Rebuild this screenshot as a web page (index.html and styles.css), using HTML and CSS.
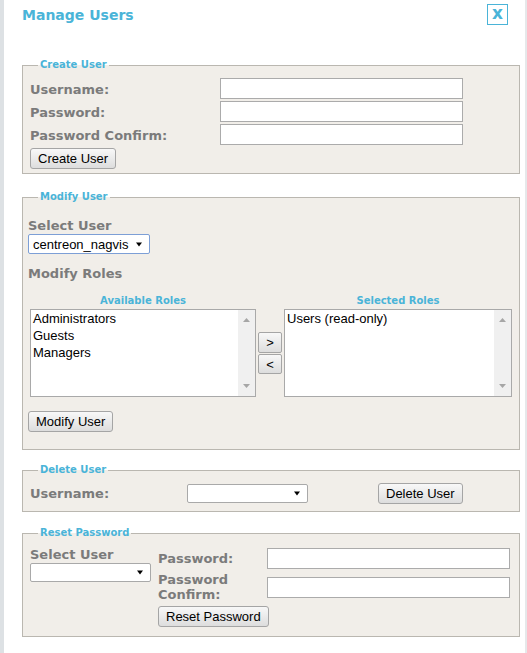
FILE: index.html
```html
<!DOCTYPE html>
<html>
<head>
<meta charset="utf-8">
<title>Manage Users</title>
<link rel="stylesheet" href="styles.css">
</head>
<body>
<div class="page">
  <div class="dialog">
    <header class="dlg-head">
      <h1 class="dlg-title">Manage Users</h1>
      <button class="close" type="button">x</button>
    </header>

    <fieldset class="box box-create">
      <legend>Create User</legend>
      <div class="box-body body-create">
        <div class="form-grid">
          <label class="lbl lbl-row">Username:</label><input class="txt" type="text">
          <label class="lbl lbl-row">Password:</label><input class="txt" type="password">
          <label class="lbl lbl-row">Password Confirm:</label><input class="txt" type="password">
        </div>
        <button class="btn btn-create" type="button">Create User</button>
      </div>
    </fieldset>

    <fieldset class="box box-modify">
      <legend>Modify User</legend>
      <div class="box-body body-modify">
        <div class="lbl lbl-block">Select User</div>
        <div class="combo combo-focus combo-modify">
          <span class="combo-val">centreon_nagvis</span>
          <svg class="combo-arrow" width="6" height="5" viewBox="0 0 6 5"><polygon points="0,0.5 6,0.5 3,4.5" fill="#000"/></svg>
        </div>
        <div class="lbl lbl-block roles-title">Modify Roles</div>
        <div class="roles">
          <div class="roles-head">Available Roles</div>
          <div></div>
          <div class="roles-head">Selected Roles</div>
          <div class="list">
            <div class="list-items">
              <div>Administrators</div>
              <div>Guests</div>
              <div>Managers</div>
            </div>
            <div class="scroll">
              <svg width="7" height="4" viewBox="0 0 7 4"><polygon points="0,4 7,4 3.5,0" fill="#a6a6a6"/></svg>
              <svg width="7" height="4" viewBox="0 0 7 4"><polygon points="0,0 7,0 3.5,4" fill="#a6a6a6"/></svg>
            </div>
          </div>
          <div class="movers">
            <button class="btn btn-move btn-move-r" type="button">&gt;</button>
            <button class="btn btn-move" type="button">&lt;</button>
          </div>
          <div class="list">
            <div class="list-items">
              <div>Users (read-only)</div>
            </div>
            <div class="scroll">
              <svg width="7" height="4" viewBox="0 0 7 4"><polygon points="0,4 7,4 3.5,0" fill="#a6a6a6"/></svg>
              <svg width="7" height="4" viewBox="0 0 7 4"><polygon points="0,0 7,0 3.5,4" fill="#a6a6a6"/></svg>
            </div>
          </div>
        </div>
        <button class="btn btn-modify" type="button">Modify User</button>
      </div>
    </fieldset>

    <fieldset class="box box-delete">
      <legend>Delete User</legend>
      <div class="box-body body-delete">
        <label class="lbl lbl-del">Username:</label>
        <div class="combo combo-sm">
          <span class="combo-val"></span>
          <svg class="combo-arrow" width="6" height="5" viewBox="0 0 6 5"><polygon points="0,0.5 6,0.5 3,4.5" fill="#000"/></svg>
        </div>
        <button class="btn btn-delete" type="button">Delete User</button>
      </div>
    </fieldset>

    <fieldset class="box box-reset">
      <legend>Reset Password</legend>
      <div class="box-body body-reset">
        <div class="reset-user">
          <div class="lbl lbl-block">Select User</div>
          <div class="combo combo-sm">
            <span class="combo-val"></span>
            <svg class="combo-arrow" width="6" height="5" viewBox="0 0 6 5"><polygon points="0,0.5 6,0.5 3,4.5" fill="#000"/></svg>
          </div>
        </div>
        <label class="lbl lbl-reset">Password:</label>
        <input class="txt txt-r1" type="password">
        <label class="lbl lbl-reset">Password Confirm:</label>
        <input class="txt" type="password">
        <button class="btn btn-reset" type="button">Reset Password</button>
      </div>
    </fieldset>
  </div>
</div>
</body>
</html>
```

FILE: styles.css
```css
html, body {
  margin: 0;
  padding: 0;
  background: #ffffff;
}

body {
  font-family: "DejaVu Sans", Verdana, sans-serif;
}

.page {
  box-sizing: border-box;
  width: 527px;
  min-height: 653px;
  border-left: 4px solid #dde1e4;
  border-right: 2px solid #e6e8ea;
}

.dialog {
  padding-left: 18px;
}

.dlg-head {
  box-sizing: border-box;
  height: 59px;
  display: flex;
  justify-content: space-between;
  align-items: flex-start;
  padding-right: 17px;
}

.dlg-title {
  margin: 6px 0 0 0;
  font-size: 14px;
  line-height: 18px;
  font-weight: bold;
  color: #4ab4d8;
}

.close {
  margin-top: 4px;
  width: 21px;
  height: 21px;
  box-sizing: border-box;
  padding: 0 0 3px 0;
  border: 1px solid #4ab4d8;
  background: #ffffff;
  color: #4ab4d8;
  font: bold 17px/16px "DejaVu Sans", sans-serif;
}

/* fieldsets */
.box {
  box-sizing: border-box;
  width: 498px;
  min-width: 0;
  margin: 0;
  padding: 0;
  border: 1px solid #bab7b0;
  background: #f1eee9;
}

.box legend {
  margin-left: 15px;
  padding: 0 2px;
  font-size: 10px;
  line-height: 12px;
  font-weight: bold;
  color: #4ab4d8;
}

.box-modify { margin-top: 17px; }
.box-delete { margin-top: 14px; }
.box-reset { margin-top: 15px; }

.lbl {
  font-size: 13px;
  font-weight: bold;
  color: #7b7b7b;
}

.lbl-block {
  line-height: 16px;
}

.txt {
  box-sizing: border-box;
  width: 243px;
  height: 21px;
  margin: 0;
  padding: 0 3px;
  border: 1px solid #ababab;
  background: #ffffff;
  font: 13px "Liberation Sans", Arial, sans-serif;
}

.btn {
  box-sizing: border-box;
  display: block;
  height: 21px;
  margin: 0;
  padding: 0 7px;
  border: 1px solid #a5a5a5;
  border-radius: 3px;
  background: linear-gradient(#f8f8f8, #dddddd);
  color: #000000;
  font: 13px/17px "Liberation Sans", Arial, sans-serif;
}

/* create */
.body-create {
  padding: 7px 0 4px 7px;
}

.form-grid {
  display: grid;
  grid-template-columns: 190px 243px;
  grid-auto-rows: 21px;
  row-gap: 2px;
}

.lbl-row {
  padding-top: 2px;
  line-height: 19px;
}

.btn-create {
  margin-top: 3px;
}

/* combos */
.combo {
  box-sizing: border-box;
  display: flex;
  align-items: center;
  justify-content: space-between;
  background: #ffffff;
  border: 1px solid #a9a9a9;
  border-radius: 2px;
  padding: 0 7px 0 4px;
  font: 13px "Liberation Sans", Arial, sans-serif;
  color: #000000;
}

.combo-focus {
  border-color: #7d9fd6;
}

.combo-modify {
  width: 122px;
  height: 20px;
}

.combo-sm {
  width: 121px;
  height: 19px;
}

.combo-arrow {
  display: block;
  flex: none;
}

/* modify */
.body-modify {
  padding: 15px 0 17px 5px;
}

.roles-title {
  margin-top: 12px;
}

.roles {
  display: grid;
  grid-template-columns: 226px 24px 228px;
  grid-template-rows: 12px 88px;
  column-gap: 2px;
  row-gap: 2px;
  margin: 13px 0 0 2px;
}

.roles-head {
  text-align: center;
  font-size: 10px;
  line-height: 12px;
  font-weight: bold;
  color: #4ab4d8;
}

.list {
  box-sizing: border-box;
  display: flex;
  border: 1px solid #a9a9a9;
  background: #ffffff;
}

.list-items {
  flex: 1;
  padding: 0 2px;
  font: 13px/17px "Liberation Sans", Arial, sans-serif;
  color: #000000;
}

.scroll {
  box-sizing: border-box;
  width: 17px;
  background: #f0f0f0;
  display: flex;
  flex-direction: column;
  justify-content: space-between;
  align-items: center;
  padding: 8px 0;
}

.scroll svg {
  display: block;
}

.movers {
  display: flex;
  flex-direction: column;
  justify-content: center;
  gap: 1px;
}

.btn-move {
  width: 24px;
  height: 20px;
  padding: 0;
  border-radius: 2px;
}

.btn-move-r {
  height: 21px;
}

.btn-modify {
  margin-top: 14px;
}

/* delete */
.body-delete {
  display: flex;
  align-items: center;
  padding: 7px 0 7px 7px;
}

.lbl-del {
  width: 157px;
  line-height: 16px;
}

.btn-delete {
  margin-left: 70px;
}

/* reset */
.body-reset {
  display: grid;
  grid-template-columns: 128px 109px 243px;
  grid-template-rows: 22px 30px auto;
  row-gap: 3px;
  padding: 8px 0 9px 7px;
}

.reset-user {
  grid-column: 1;
  grid-row: 1 / 3;
}

.lbl-reset {
  align-self: center;
  line-height: 15px;
}

.txt-r1 {
  margin-top: 1px;
}

.body-reset .txt {
  align-self: center;
}

.body-reset .txt-r1 {
  align-self: start;
}

.btn-reset {
  grid-column: 2 / 4;
  justify-self: start;
  margin-top: 1px;
}
```
